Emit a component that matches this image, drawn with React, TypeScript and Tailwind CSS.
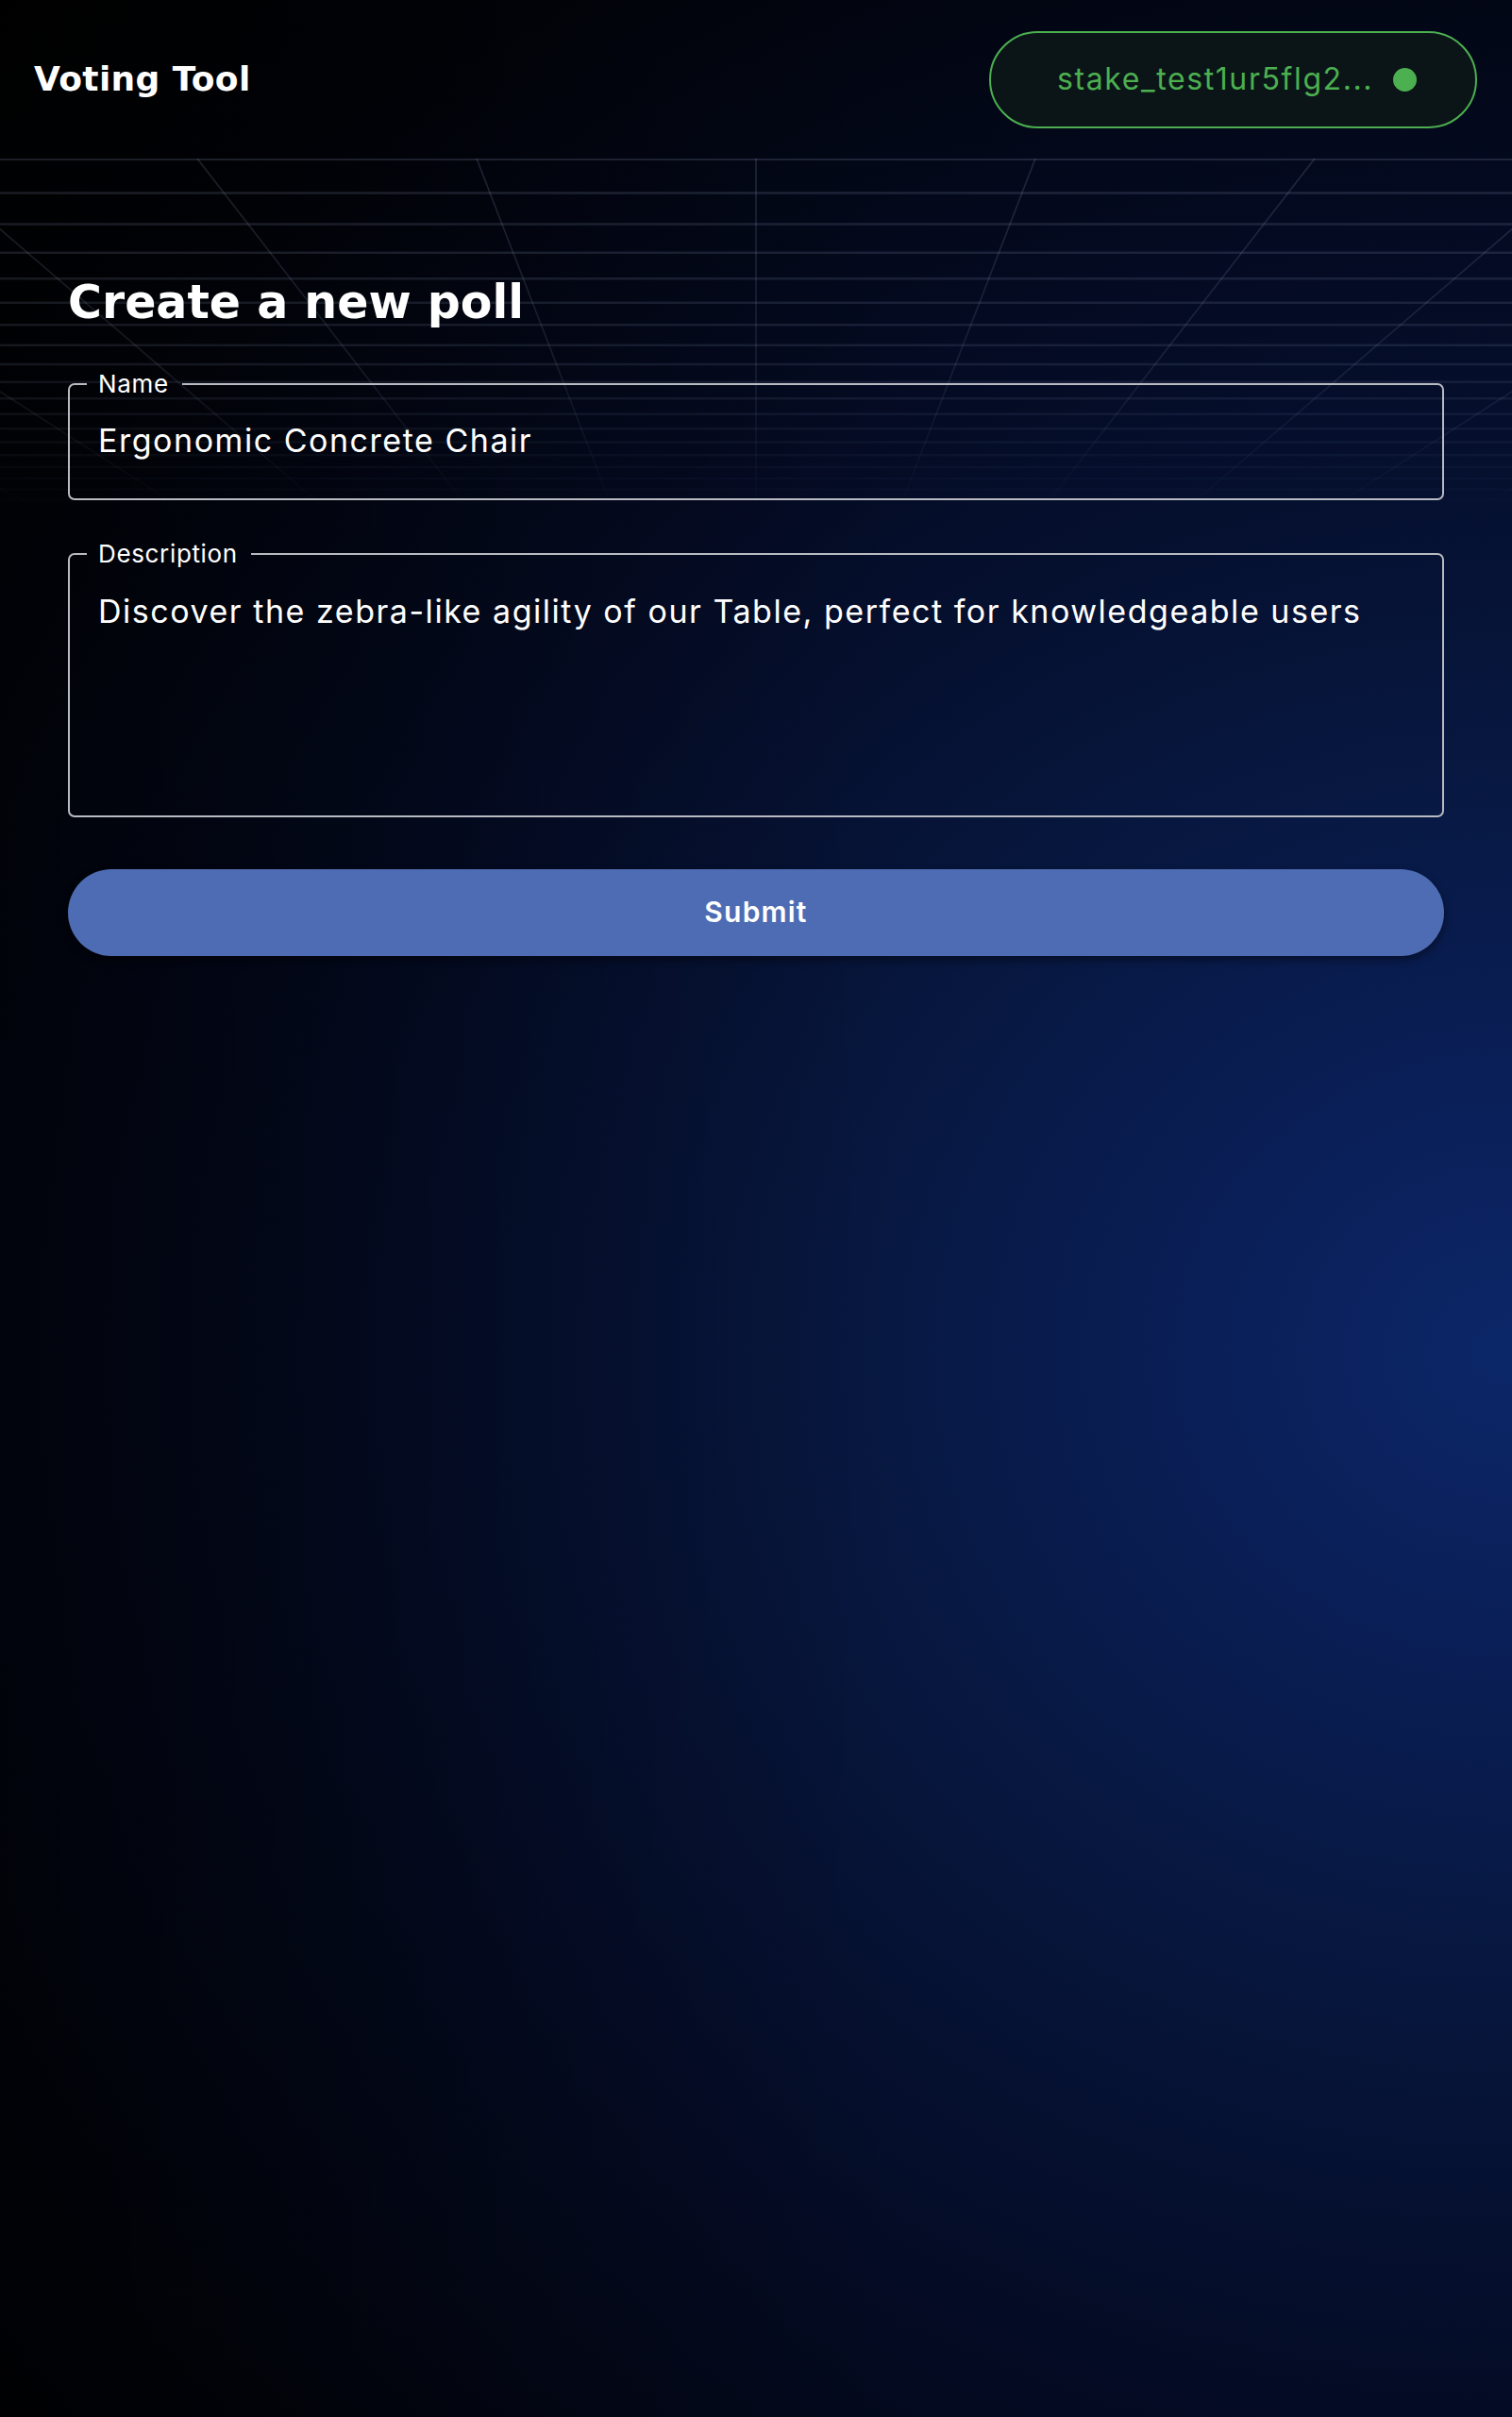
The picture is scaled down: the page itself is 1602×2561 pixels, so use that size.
import React from 'react';

const VANISH = 763;
const verticals = Array.from({ length: 17 }, (_, i) => 801 + (i - 8) * 296);
const horizontals = Array.from({ length: 23 }, (_, n) => VANISH - 1 / (0.001311 + 0.0000655 * n));

const GridBackdrop: React.FC = () => {
  return (
    <svg
      className="pointer-events-none absolute left-0 top-[168px] h-[400px] w-full"
      viewBox="0 0 1602 400"
      preserveAspectRatio="none"
    >
      <defs>
        <linearGradient id="fade" x1="0" y1="0" x2="0" y2="1">
          <stop offset="0" stopColor="#fff" stopOpacity="1" />
          <stop offset="0.55" stopColor="#fff" stopOpacity="0.7" />
          <stop offset="0.95" stopColor="#fff" stopOpacity="0" />
        </linearGradient>
        <mask id="gridMask">
          <rect x="0" y="0" width="1602" height="400" fill="url(#fade)" />
        </mask>
      </defs>
      <g mask="url(#gridMask)">
        {horizontals.map((y, i) => (
          <line key={'h' + i} x1="0" x2="1602" y1={y} y2={y} stroke="rgba(170,185,220,0.17)" strokeWidth={i === 0 ? 3.5 : 2.5} />
        ))}
        {verticals.map((x, i) => (
          <line
            key={'v' + i}
            x1={x}
            y1="0"
            x2={801 + (x - 801) * 0.4758}
            y2="400"
            stroke="rgba(170,185,220,0.17)"
            strokeWidth="1.75"
          />
        ))}
      </g>
    </svg>
  );
};

const WalletPill: React.FC<{ address: string }> = ({ address }) => (
  <button className="flex h-[103px] w-[517px] items-center gap-[21px] rounded-full border-2 border-[#4caf50] bg-[#0b1518] pl-[70px] font-['Inter',sans-serif] text-[32px] tracking-[0.05em] text-[#4caf50]">
    <span>{address}</span>
    <span className="h-[25px] w-[25px] rounded-full bg-[#4caf50]" />
  </button>
);

const OutlinedField: React.FC<{ label: string; children: React.ReactNode; className?: string }> = ({ label, children, className }) => (
  <fieldset className={'rounded-[7px] border-2 border-[#b9bbc2] px-[30px] ' + (className ?? '')}>
    <legend className="-ml-[12px] pl-[12px] pr-[14px] text-[26px] leading-none tracking-[0.025em] text-white">{label}</legend>
    {children}
  </fieldset>
);

export default function App() {
  return (
    <div className="relative min-h-screen w-full overflow-hidden bg-[#010206] bg-[linear-gradient(to_right,rgba(0,0,0,0.45)_0%,rgba(0,0,0,0.15)_35%,rgba(0,0,0,0)_60%),radial-gradient(ellipse_farthest-corner_at_100%_56%,#0c2768_0%,#0a1f58_14%,#07173f_32%,#040b24_56%,#010309_84%,#000000_100%)] font-['Inter',sans-serif] text-white">
      <GridBackdrop />
      <header className="relative flex h-[168px] items-center justify-between pl-[36px] pr-[37px]">
        <h1 className="font-['DejaVu_Sans',sans-serif] text-[36px] font-bold tracking-[0.01em]">Voting Tool</h1>
        <WalletPill address="stake_test1ur5flg2..." />
      </header>

      <main className="relative flex flex-col px-[72px] pt-[124px]">
        <h2 className="font-['DejaVu_Sans',sans-serif] text-[49px] font-bold leading-[1.2]">Create a new poll</h2>

        <OutlinedField label="Name" className="mt-[43px]">
          <div className="flex h-[108px] items-center pb-[15px] text-[34px] tracking-[0.045em] text-white">
            Ergonomic Concrete Chair
          </div>
        </OutlinedField>

        <OutlinedField label="Description" className="mt-[44px]">
          <div className="h-[264px] pt-[24px] text-[34px] leading-[48px] tracking-[0.045em] text-white">
            Discover the zebra-like agility of our Table, perfect for knowledgeable users
          </div>
        </OutlinedField>

        <button className="mt-[55px] h-[92px] w-full rounded-full bg-[#4e6cb4] text-[30px] font-semibold tracking-[0.04em] text-white shadow-[0_4px_10px_rgba(0,0,0,0.45)]">
          Submit
        </button>
      </main>
    </div>
  );
}
